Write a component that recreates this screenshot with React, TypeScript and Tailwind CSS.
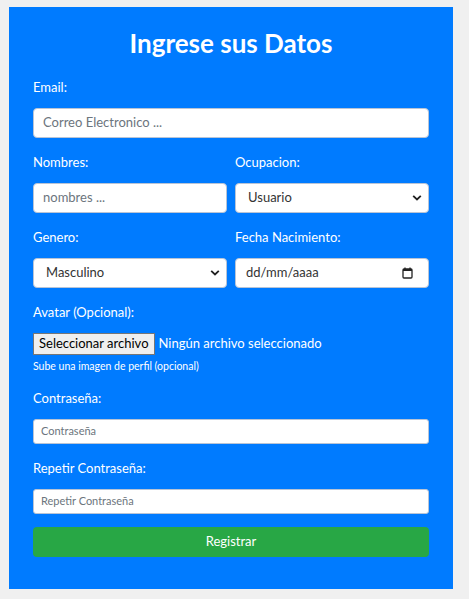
import React from "react";

const font = { fontFamily: 'Lato, "Open Sans", sans-serif' };

function Chevron() {
  return (
    <svg width="10" height="7" viewBox="0 0 10 7" className="absolute right-[6px] top-1/2 -translate-y-1/2">
      <path d="M1.2 1.3 L5 5 L8.8 1.3" fill="none" stroke="#222" strokeWidth="1.8" />
    </svg>
  );
}

function Calendar() {
  return (
    <svg width="11" height="12" viewBox="0 0 11 12" className="absolute right-[15px] top-1/2 -translate-y-1/2">
      <rect x="1" y="2" width="9" height="9" rx="1" fill="none" stroke="#222" strokeWidth="1.3" />
      <rect x="1" y="2" width="9" height="2" fill="#222" />
      <path d="M3 0.5 V2.5 M8 0.5 V2.5" stroke="#222" strokeWidth="1.3" />
    </svg>
  );
}

export default function App() {
  return (
    <div className="min-h-screen bg-[#f0f0f0] pt-[7px] pl-[9px]" style={font}>
      <div className="w-[444px] h-[582px] bg-[#007bff] px-[24px] pt-[20px] text-white">
        <h2 className="text-center text-[26px] leading-[32px] font-bold">Ingrese sus Datos</h2>

        <div className="mt-[18px] text-[13px] leading-[20px]">Email:</div>
        <div className="mt-[11px] h-[30px] bg-white rounded-[4px] border border-[#b8c4d6] flex items-center pl-[9px] text-[13px] text-[#6c757d]">
          Correo Electronico ...
        </div>

        <div className="mt-[14px] grid grid-cols-2 gap-x-[8px]">
          <div>
            <div className="text-[13px] leading-[20px]">Nombres:</div>
            <div className="mt-[11px] h-[30px] bg-white rounded-[4px] border border-[#b8c4d6] flex items-center pl-[9px] text-[13px] text-[#6c757d]">
              nombres ...
            </div>
          </div>
          <div>
            <div className="text-[13px] leading-[20px]">Ocupacion:</div>
            <div className="relative mt-[11px] h-[30px] bg-white rounded-[4px] border border-[#b8c4d6] flex items-center pl-[12px] text-[13px] text-[#333]">
              Usuario
              <Chevron />
            </div>
          </div>
        </div>

        <div className="mt-[14px] grid grid-cols-2 gap-x-[8px]">
          <div>
            <div className="text-[13px] leading-[20px]">Genero:</div>
            <div className="relative mt-[11px] h-[30px] bg-white rounded-[4px] border border-[#b8c4d6] flex items-center pl-[12px] text-[13px] text-[#333]">
              Masculino
              <Chevron />
            </div>
          </div>
          <div>
            <div className="text-[13px] leading-[20px]">Fecha Nacimiento:</div>
            <div className="relative mt-[11px] h-[30px] bg-white rounded-[4px] border border-[#b8c4d6] flex items-center pl-[10px] text-[13px] text-[#333]">
              dd/mm/aaaa
              <Calendar />
            </div>
          </div>
        </div>

        <div className="mt-[14px] text-[13px] leading-[20px]">Avatar (Opcional):</div>
        <div className="mt-[11px] flex items-center h-[22px]">
          <div className="h-[22px] px-[5px] bg-[#efefef] border border-[#767676] text-black text-[13px] flex items-center">
            Seleccionar archivo
          </div>
          <span className="ml-[4px] text-[13px]">Ningún archivo seleccionado</span>
        </div>
        <div className="mt-[4px] text-[10.5px] leading-[14px]">Sube una imagen de perfil (opcional)</div>

        <div className="mt-[15px] text-[13px] leading-[20px]">Contraseña:</div>
        <div className="mt-[11px] h-[25px] bg-white rounded-[3px] border border-[#b8c4d6] flex items-center pl-[7px] text-[11px] text-[#6c757d]">
          Contraseña
        </div>

        <div className="mt-[14px] text-[13px] leading-[20px]">Repetir Contraseña:</div>
        <div className="mt-[11px] h-[25px] bg-white rounded-[3px] border border-[#b8c4d6] flex items-center pl-[7px] text-[11px] text-[#6c757d]">
          Repetir Contraseña
        </div>

        <div className="mt-[13px] h-[30px] bg-[#28a745] rounded-[4px] flex items-center justify-center text-[13px]">
          Registrar
        </div>
      </div>
    </div>
  );
}
